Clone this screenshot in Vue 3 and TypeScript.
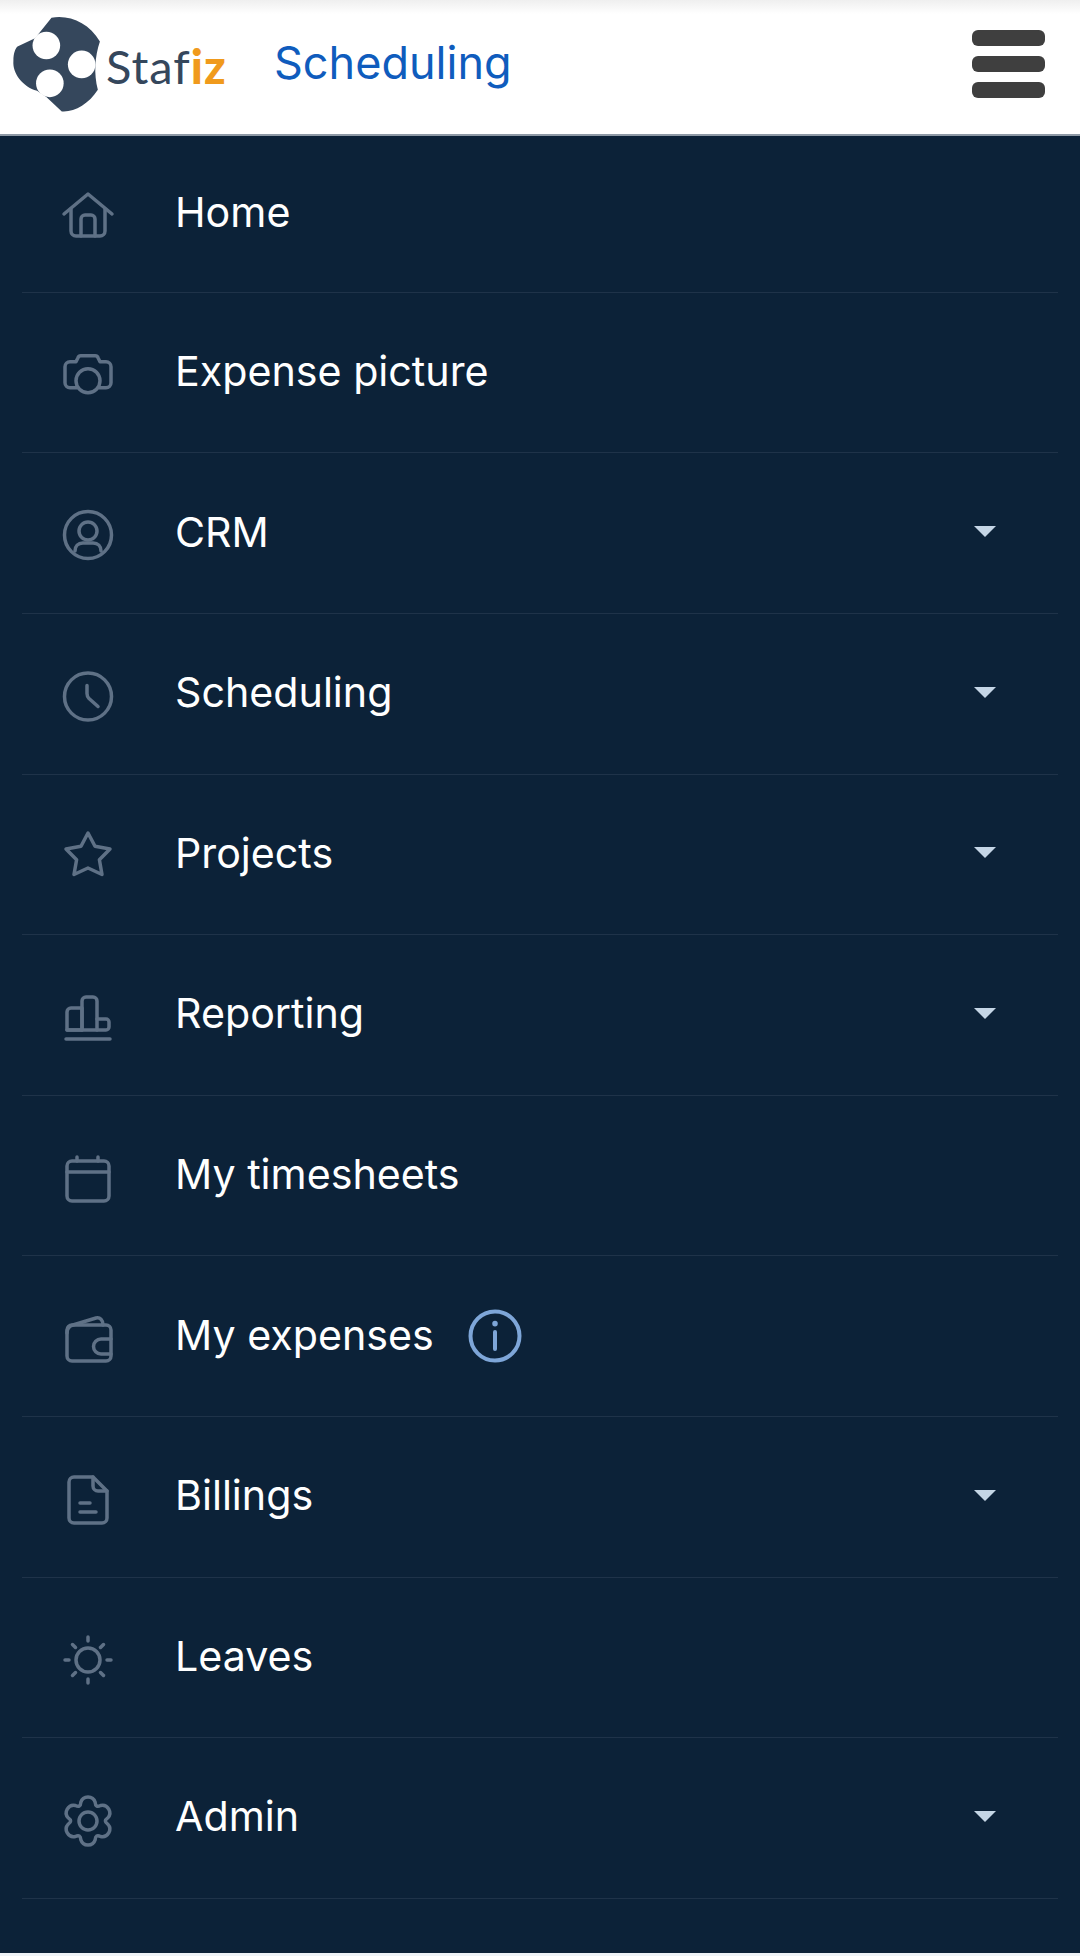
<script setup lang="ts">
interface Circle { cx: number; cy: number; r: number }
interface Item { label: string; dy: number; paths: string[]; circles?: Circle[]; caret?: boolean; info?: boolean }

function gearPath(): string {
  const at = (deg: number, r: number) => {
    const a = (deg * Math.PI) / 180
    return `${(25 + r * Math.cos(a)).toFixed(2)} ${(25 + r * Math.sin(a)).toFixed(2)}`
  }
  let d = `M${at(-90 - 21, 20)}`
  for (let k = 0; k < 6; k++) {
    const a = -90 + 60 * k
    d += ` A7.5 7.5 0 0 1 ${at(a + 21, 20)}`
    d += ` Q${at(a + 30, 15)} ${at(a + 39, 20)}`
  }
  return d + ' Z'
}

const items: Item[] = [
  {
    label: 'Home', dy: -2,
    paths: ['M1 24 L25 4 L49 24', 'M8 19 V41 a5 5 0 0 0 5 5 H37 a5 5 0 0 0 5 -5 V19', 'M18 46 V29 a4 4 0 0 1 4 -4 H28 a4 4 0 0 1 4 4 V46'],
  },
  {
    label: 'Expense picture', dy: -2.7,
    paths: ['M14 38 H7 a5 5 0 0 1 -5 -5 V17 a5 5 0 0 1 5 -5 H13 l2 -4 a3 3 0 0 1 3 -2 H32 a3 3 0 0 1 3 2 l2 4 H43 a5 5 0 0 1 5 5 V33 a5 5 0 0 1 -5 5 H36'],
    circles: [{ cx: 25, cy: 31, r: 12 }],
  },
  {
    label: 'CRM', dy: -3, caret: true,
    paths: ['M12 41 C12 36 15 33 20 33 H30 C35 33 38 36 38 41'],
    circles: [{ cx: 25, cy: 25, r: 23.5 }, { cx: 25, cy: 21, r: 9 }],
  },
  {
    label: 'Scheduling', dy: -3.5, caret: true,
    paths: ['M24 14 V22 Q24 25 26 27 L35 35'],
    circles: [{ cx: 25, cy: 25, r: 23.5 }],
  },
  {
    label: 'Projects', dy: -1, caret: true,
    paths: ['M25 4 L32 17.3 L47 20 L36.4 30.7 L39 45.5 L25 39 L11 45.5 L13.6 30.7 L3 20 L18 17.3 Z'],
  },
  {
    label: 'Reporting', dy: 0, caret: true,
    paths: [
      'M19 41 V19 H8 a4 4 0 0 0 -4 4 V41 Z',
      'M19 41 V12 a4 4 0 0 1 4 -4 H30 a4 4 0 0 1 4 4 V41',
      'M34 30 H43 a3 3 0 0 1 3 3 V38 a3 3 0 0 1 -3 3 H4',
      'M3 50 H47',
    ],
  },
  {
    label: 'My timesheets', dy: 0,
    paths: [
      'M9 11 H41 a5 5 0 0 1 5 5 V46 a5 5 0 0 1 -5 5 H9 a5 5 0 0 1 -5 -5 V16 a5 5 0 0 1 5 -5 Z',
      'M4 22 H46', 'M14 7 V11', 'M35 7 V11',
    ],
  },
  {
    label: 'My expenses', dy: 0, info: true,
    paths: [
      'M4 23 C4 18 6 16 10 15 L33 8 C37 7 40 10 40 15',
      'M9 15 H43 a5 5 0 0 1 5 5 V46 a5 5 0 0 1 -5 5 H9 a5 5 0 0 1 -5 -5 V20 a5 5 0 0 1 5 -5 Z',
      'M48 29 H38 a7.5 7.5 0 0 0 0 15 H48',
    ],
  },
  {
    label: 'Billings', dy: 0, caret: true,
    paths: [
      'M30 6 H11 a5 5 0 0 0 -5 5 V47 a5 5 0 0 0 5 5 H39 a5 5 0 0 0 5 -5 V20 Z',
      'M30 6 V15 a5 5 0 0 0 5 5 H44',
      'M17 32 H27', 'M17 41 H33',
    ],
  },
  {
    label: 'Leaves', dy: -4,
    paths: ['M25 2 V6', 'M25 44 V48', 'M2 25 H6', 'M44 25 H48', 'M9.5 9.5 L12.5 12.5', 'M37.5 37.5 L40.5 40.5', 'M9.5 40.5 L12.5 37.5', 'M37.5 12.5 L40.5 9.5'],
    circles: [{ cx: 25, cy: 25, r: 12 }],
  },
  {
    label: 'Admin', dy: -4, caret: true,
    paths: [gearPath()],
    circles: [{ cx: 25, cy: 25, r: 9 }],
  },
]
</script>

<template>
  <div class="page">
    <header class="topbar">
      <div class="brand">
        <svg class="mark" viewBox="0 0 100 120" aria-hidden="true">
          <path class="mark-body" d="M50 18 C68 15 86 23 97 41 C92 56 91 72 95 88 C86 102 72 110 60 109 L45 95 L36 89 C22 85 12 72 13 60 C13 52 15 48 17 46 L34 38 Z" />
          <circle class="mark-hole" cx="45" cy="45" r="13.4" />
          <circle class="mark-hole" cx="48.4" cy="81.7" r="13.4" />
          <circle class="mark-hole" cx="79.3" cy="63.3" r="13.4" />
        </svg>
        <span class="wordmark">Staf<b>iz</b></span>
      </div>
      <span class="title">Scheduling</span>
      <button class="burger" type="button" aria-label="Menu">
        <i></i><i></i><i></i>
      </button>
    </header>

    <nav class="menu">
      <a v-for="item in items" :key="item.label" class="row">
        <svg class="icon" :viewBox="`0 ${item.dy} 50 50`" aria-hidden="true">
          <path v-for="d in item.paths" :key="d" :d="d" />
          <circle v-for="c in item.circles" :key="c.r + '-' + c.cy" :cx="c.cx" :cy="c.cy" :r="c.r" />
        </svg>
        <span class="label">{{ item.label }}</span>
        <svg v-if="item.info" class="info" viewBox="0 0 54 54" aria-hidden="true">
          <circle cx="27" cy="27" r="24.5" />
          <path d="M27 23 V40" />
          <path class="dot" d="M27 14.5 V14.7" />
        </svg>
        <span v-if="item.caret" class="caret"></span>
      </a>
    </nav>
  </div>
</template>

<style scoped>
.page {
  width: 1080px;
  height: 1956px;
  display: flex;
  flex-direction: column;
  overflow: hidden;
  background: #0c2238;
  border-bottom: 3px solid #eef3f7;
  box-sizing: border-box;
  font-family: Inter, "Liberation Sans", sans-serif;
}
.topbar {
  flex: none;
  height: 136px;
  box-sizing: border-box;
  display: flex;
  align-items: center;
  background: linear-gradient(#efefef 0, #ffffff 14px);
  border-bottom: 2px solid #8e99a5;
}
.brand {
  display: flex;
  align-items: center;
  width: 274px;
  height: 100%;
}
.mark {
  width: 103px;
  height: 124px;
  flex: none;
  margin-top: -13px;
}
.mark-body { fill: #35475c; }
.mark-hole { fill: #ffffff; }
.wordmark {
  margin-left: 3px;
  font-family: Lato, "Open Sans", sans-serif;
  font-size: 47px;
  line-height: 1;
  color: #35475c;
  letter-spacing: 1px;
  margin-top: -1px;
}
.wordmark b {
  color: #f09a1c;
  font-weight: 900;
}
.title {
  font-size: 45px;
  color: #0f5cbd;
  margin-top: -9px;
}
.burger {
  margin-left: auto;
  margin-right: 35px;
  margin-top: -6px;
  width: 73px;
  padding: 0;
  border: 0;
  background: none;
  display: flex;
  flex-direction: column;
  gap: 10px;
}
.burger i {
  display: block;
  height: 16px;
  border-radius: 6px;
  background: #3f3f3f;
}
.menu {
  flex: none;
  margin: 0 22px;
  display: flex;
  flex-direction: column;
}
.row {
  flex: none;
  height: 160.6px;
  box-sizing: border-box;
  border-bottom: 1.5px solid #1f3349;
  display: flex;
  align-items: center;
  padding-left: 41px;
  color: #ffffff;
}
.row:first-child { height: 156.8px; }
.icon {
  width: 50px;
  height: 50px;
  flex: none;
  margin-top: -2px;
  overflow: visible;
  fill: none;
  stroke: #5f7186;
  stroke-width: 3.5;
  stroke-linecap: round;
  stroke-linejoin: round;
}
.label {
  margin-left: 62px;
  font-size: 41.2px;
  line-height: 1;
  margin-top: -2px;
}
.info {
  width: 54px;
  height: 54px;
  flex: none;
  margin-left: 34px;
  fill: none;
  stroke: #7ea6d8;
  stroke-width: 4;
  stroke-linecap: round;
}
.info .dot { stroke-width: 5.5; }
.caret {
  margin-left: auto;
  margin-right: 62px;
  margin-top: -3px;
  width: 0;
  height: 0;
  border-left: 11px solid transparent;
  border-right: 11px solid transparent;
  border-top: 11px solid #c5d6e6;
}
</style>
